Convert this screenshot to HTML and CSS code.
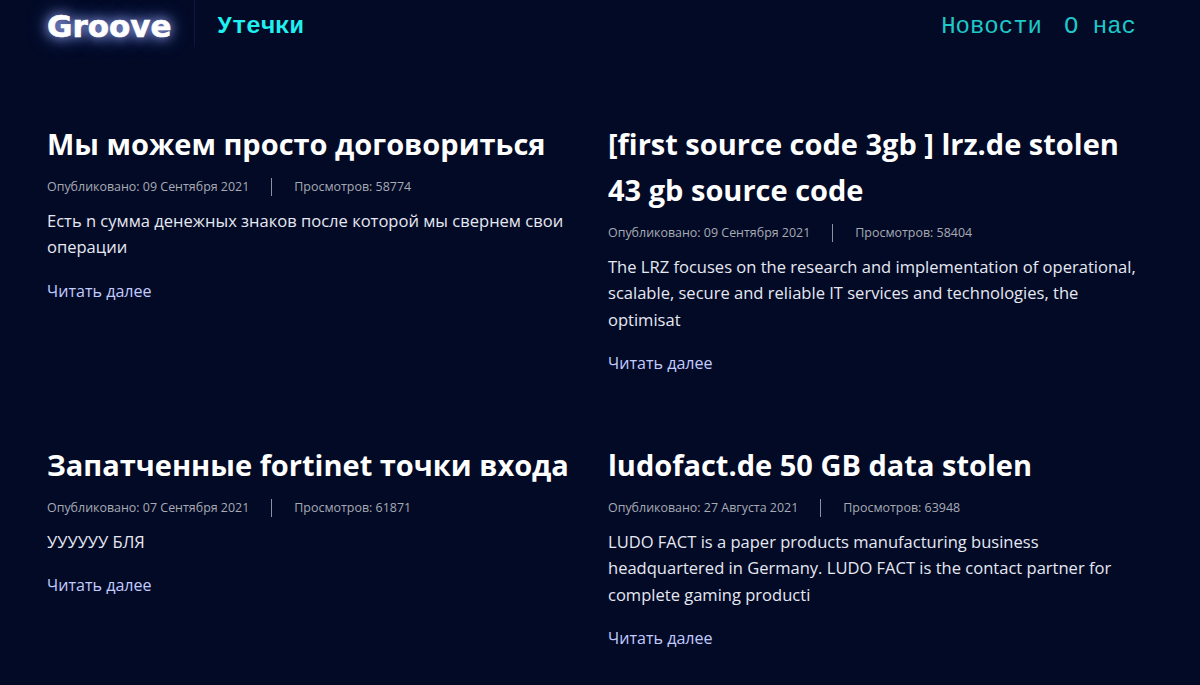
FILE: index.html
```html
<!DOCTYPE html>
<html lang="ru">
<head>
<meta charset="utf-8">
<title>Groove</title>
<link rel="stylesheet" href="styles.css">
</head>
<body>
<header class="nav">
  <div class="brand"><a class="logo">Groove</a></div>
  <a class="section">Утечки</a>
  <nav class="links"><a>Новости</a><a>О нас</a></nav>
</header>
<main class="grid">
  <article class="post">
    <h2>Мы можем просто договориться</h2>
    <div class="meta"><span>Опубликовано: 09 Сентября 2021</span><i></i><span>Просмотров: 58774</span></div>
    <p>Есть n сумма денежных знаков после которой мы свернем свои операции</p>
    <a class="more">Читать далее</a>
  </article>
  <article class="post">
    <h2>[first source code 3gb ] lrz.de stolen 43 gb source code</h2>
    <div class="meta"><span>Опубликовано: 09 Сентября 2021</span><i></i><span>Просмотров: 58404</span></div>
    <p>The LRZ focuses on the research and implementation of operational, scalable, secure and reliable IT services and technologies, the optimisat</p>
    <a class="more">Читать далее</a>
  </article>
  <article class="post">
    <h2>Запатченные fortinet точки входа</h2>
    <div class="meta"><span>Опубликовано: 07 Сентября 2021</span><i></i><span>Просмотров: 61871</span></div>
    <p>УУУУУУ БЛЯ</p>
    <a class="more">Читать далее</a>
  </article>
  <article class="post">
    <h2>ludofact.de 50 GB data stolen</h2>
    <div class="meta"><span>Опубликовано: 27 Августа 2021</span><i></i><span>Просмотров: 63948</span></div>
    <p>LUDO FACT is a paper products manufacturing business headquartered in Germany. LUDO FACT is the contact partner for complete gaming producti</p>
    <a class="more">Читать далее</a>
  </article>
</main>
</body>
</html>
```
FILE: styles.css
```css
* { box-sizing: border-box; }
html, body { margin: 0; height: 100%; }
body {
  background: #020a26;
  color: #fff;
  font-family: "Open Sans", "Noto Sans", sans-serif;
  overflow: hidden;
}
.nav {
  display: flex;
  align-items: center;
  height: 52px;
  padding: 0 64px 0 47px;
}
.brand {
  align-self: flex-start;
  height: 47px;
  display: flex;
  align-items: center;
  padding: 5px 22px 0 0;
  border-right: 1px solid #0e1740;
}
.logo {
  font-family: "DejaVu Sans", sans-serif;
  font-weight: 700;
  font-size: 31px;
  color: #fff;
  -webkit-text-stroke: 0.6px #fff;
  text-shadow: 0 0 12px #a9b8ff, 0 0 20px #5a6fd0;
}
.section {
  margin-left: 23px;
  font-family: "Liberation Mono", monospace;
  font-weight: 700;
  font-size: 24px;
  color: #1ff0f0;
}
.links {
  margin-left: auto;
  display: flex;
  gap: 22px;
  font-family: "Liberation Mono", monospace;
  font-size: 24px;
  color: #1fc8c8;
}
.grid {
  display: grid;
  grid-template-columns: 530px 530px;
  column-gap: 31px;
  row-gap: 65.6px;
  padding: 69px 47px 0;
}
h2 {
  margin: 0 0 11px;
  font-size: 29px;
  font-weight: 700;
  line-height: 46px;
}
.meta {
  display: flex;
  align-items: center;
  font-size: 12.45px;
  color: #a8aab4;
  line-height: 18px;
}
.meta i {
  width: 1px;
  height: 18px;
  background: #8d90a0;
  margin: 0 22px;
}
p {
  margin: 12px 0 0;
  font-size: 16.55px;
  line-height: 26.4px;
  color: #e6e8f2;
}
.more {
  display: block;
  margin-top: 17px;
  font-size: 16.1px;
  line-height: 26px;
  color: #c3ccff;
}
```
